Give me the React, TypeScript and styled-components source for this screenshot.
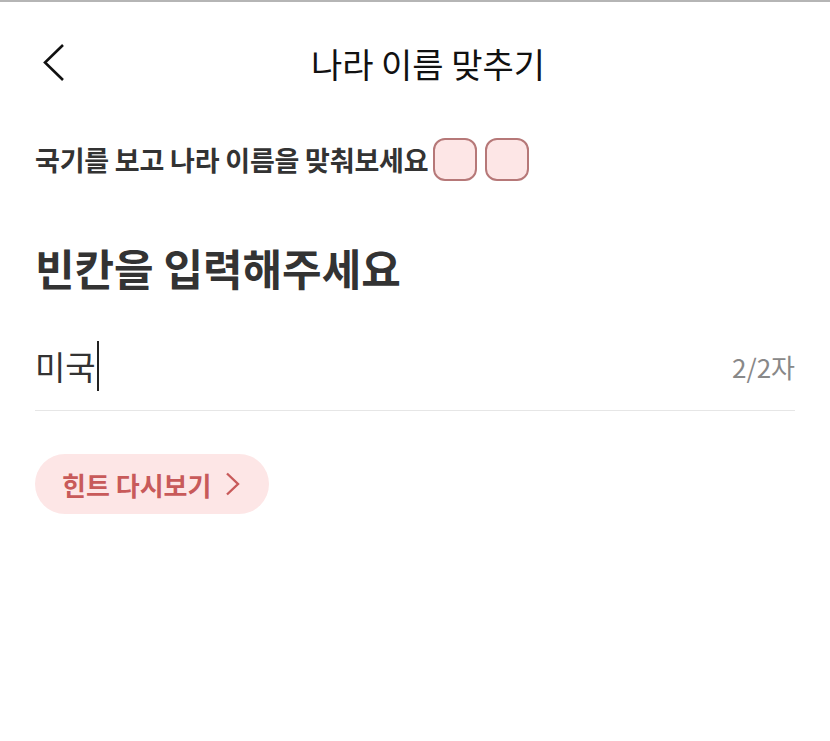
import React from "react";
import styled, { createGlobalStyle } from "styled-components";

const Global = createGlobalStyle`
  html, body { margin: 0; padding: 0; background: #fff; }
  body { font-family: "Noto Sans CJK KR", "Noto Sans", sans-serif; }
`;

const Page = styled.div`
  width: 830px;
  min-height: 741px;
  border-top: 2px solid #b5b5b5;
  box-sizing: border-box;
  background: #fff;
`;

const Header = styled.header`
  height: 122px;
  display: grid;
  grid-template-columns: 1fr auto 1fr;
  align-items: center;
  padding: 0 14px 0 40px;
`;

const BackButton = styled.button`
  justify-self: start;
  width: 28px;
  height: 42px;
  padding: 0;
  border: none;
  background: none;
  display: flex;
  align-items: center;
  justify-content: center;
`;

const Title = styled.h1`
  margin: 0;
  font-size: 34px;
  font-weight: 400;
  letter-spacing: 0;
  color: #111;
`;

const Content = styled.main`
  padding: 0 35px;
  display: flex;
  flex-direction: column;
`;

const HintRow = styled.div`
  display: flex;
  align-items: center;
  gap: 5px;
  height: 44px;
  margin-top: 13px;
`;

const HintText = styled.p`
  margin: 0;
  font-size: 27px;
  font-weight: 700;
  letter-spacing: -0.2px;
  color: #333;
`;

const Blank = styled.span`
  width: 44px;
  height: 43px;
  box-sizing: border-box;
  border: 2px solid #b67878;
  border-radius: 12px;
  background: #fde6e6;
  & + & { margin-left: 3px; }
`;

const Heading = styled.h2`
  margin: 62px 0 0 0;
  font-size: 43px;
  line-height: 48px;
  font-weight: 700;
  letter-spacing: 0;
  color: #333;
`;

const InputRow = styled.div`
  margin-top: 38px;
  display: flex;
  align-items: center;
  justify-content: space-between;
  height: 82px;
  padding-bottom: 7px;
  box-sizing: border-box;
  border-bottom: 1.5px solid #e6e6e6;
`;

const Typed = styled.span`
  display: flex;
  align-items: center;
  font-size: 33px;
  color: #333;
`;

const Caret = styled.span`
  width: 2px;
  height: 50px;
  background: #222;
  margin-left: 1px;
`;

const Counter = styled.span`
  font-size: 26px;
  color: #888;
`;

const HintButton = styled.button`
  align-self: flex-start;
  margin-top: 43px;
  height: 60px;
  padding: 0 29px 0 27px;
  border: none;
  border-radius: 30px;
  background: #fde6e6;
  display: flex;
  align-items: center;
  gap: 14px;
  font-family: inherit;
  font-size: 26px;
  font-weight: 700;
  letter-spacing: 0;
  color: #c85a5a;
`;

export default function App() {
  return (
    <>
      <Global />
      <Page>
        <Header>
          <BackButton aria-label="뒤로">
            <svg width="22" height="38" viewBox="0 0 22 38" fill="none">
              <path d="M20 1 L2 18.5 L20 36" stroke="#111" strokeWidth="2.6" />
            </svg>
          </BackButton>
          <Title>나라 이름 맞추기</Title>
          <span />
        </Header>
        <Content>
          <HintRow>
            <HintText>국기를 보고 나라 이름을 맞춰보세요</HintText>
            <Blank />
            <Blank />
          </HintRow>
          <Heading>빈칸을 입력해주세요</Heading>
          <InputRow>
            <Typed>
              미국
              <Caret />
            </Typed>
            <Counter>2/2자</Counter>
          </InputRow>
          <HintButton>
            힌트 다시보기
            <svg width="15" height="24" viewBox="0 0 15 24" fill="none">
              <path d="M2 1.5 L13 12 L2 22.5" stroke="#c85a5a" strokeWidth="2.4" />
            </svg>
          </HintButton>
        </Content>
      </Page>
    </>
  );
}
